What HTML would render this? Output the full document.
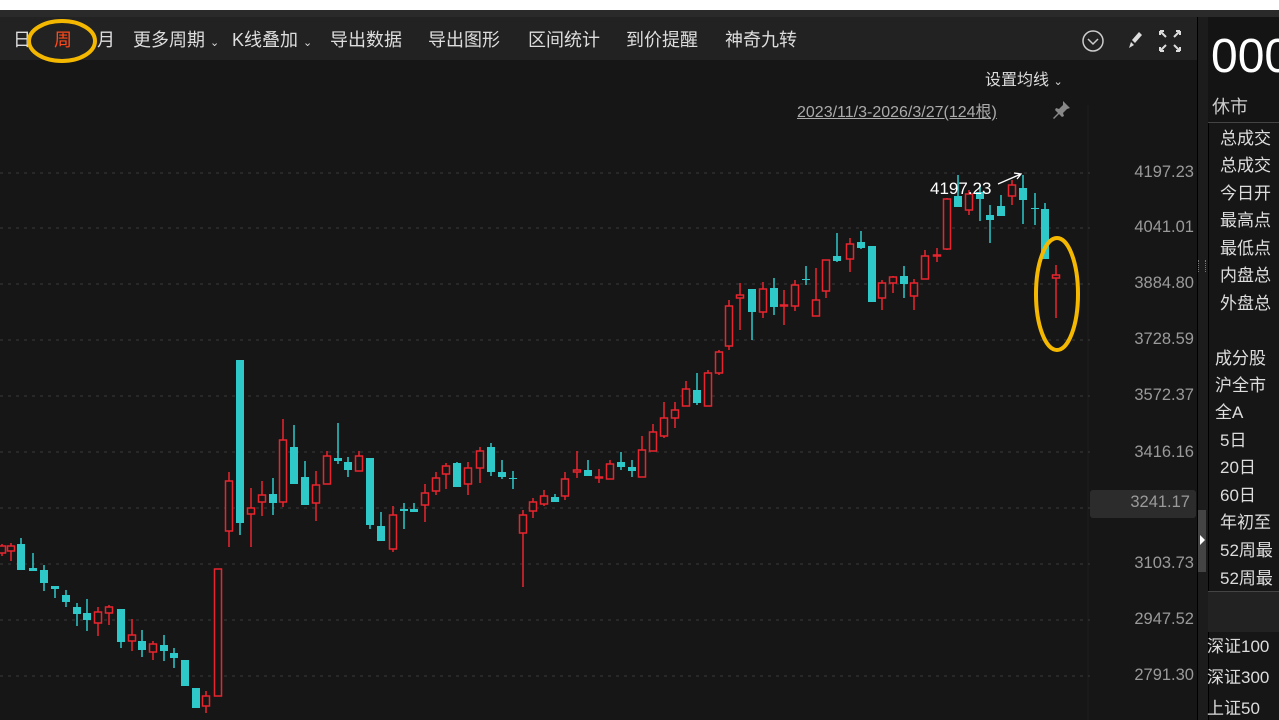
<!DOCTYPE html>
<html><head><meta charset="utf-8"><style>
body{margin:0;width:1279px;height:720px;overflow:hidden;background:#161616;font-family:"Liberation Sans","Noto Sans CJK SC",sans-serif;position:relative}
.a{position:absolute;white-space:nowrap}
.tb{position:absolute;top:10px;left:0;width:1197px;height:50px;background:#222}
.tb span{position:absolute;top:18px;font-size:18px;color:#ddd;line-height:20px}
.px{position:absolute;right:85px;font-size:16.5px;color:#9a9a9a;text-align:right;width:90px}
.r{position:absolute;left:1220px;font-size:17px;color:#ddd;line-height:20px}
</style></head><body>
<div class="a" style="left:0;top:0;width:1279px;height:10px;background:#fff"></div>
<div class="a" style="left:0;top:10px;width:1279px;height:7px;background:#2a2a2a"></div>
<div class="tb" style="top:17px;height:43px">
<span style="left:13px;top:13px">日</span>
<span style="left:54px;top:13px;color:#ff4a1a">周</span>
<span style="left:97px;top:13px">月</span>
<span style="left:133px;top:13px">更多周期 <small style="font-size:11px">⌄</small></span>
<span style="left:232px;top:13px">K线叠加 <small style="font-size:11px">⌄</small></span>
<span style="left:330px;top:13px">导出数据</span>
<span style="left:428px;top:13px">导出图形</span>
<span style="left:528px;top:13px">区间统计</span>
<span style="left:626px;top:13px">到价提醒</span>
<span style="left:725px;top:13px">神奇九转</span>
</div>
<svg class="a" style="left:0;top:0" width="1279" height="720">
<ellipse cx="62" cy="41" rx="33" ry="20" fill="none" stroke="#f5b800" stroke-width="4"/>
<circle cx="1093" cy="41" r="10" fill="none" stroke="#ccc" stroke-width="1.5"/>
<path d="M1088 39l5 5 5-5" fill="none" stroke="#ccc" stroke-width="1.5"/>
<path d="M1139 32l-7 8 3 3 7-8z M1131 42l3 3-5 3z" fill="#ddd"/>
<g stroke="#ddd" stroke-width="2" fill="none"><path d="M1160 31l6 6M1160 31v4M1160 31h4M1180 31l-6 6M1180 31v4M1180 31h-4M1160 51l6-6M1160 51v-4M1160 51h4M1180 51l-6-6M1180 51v-4M1180 51h-4"/></g>
<path d="M1063 101l7 7-3 1-4 4 1 3-2 1-3-3-5 5-1-1 5-5-3-3 1-2 3 1 4-4z" fill="#888"/>
<line x1="1088" y1="105" x2="1088" y2="720" stroke="#1d1d1d"/>
<g id="grid" stroke="#3a3a3a" stroke-dasharray="3 5"></g>
<g id="c"></g>
<text x="930" y="194" fill="#fff" font-size="17" font-family="Liberation Sans">4197.23</text>
<path d="M998 184L1021 174M1014 173l7 1-4 5" stroke="#fff" fill="none" stroke-width="1.3"/>
<ellipse cx="1057" cy="294" rx="21" ry="56" fill="none" stroke="#f5b800" stroke-width="4"/>
</svg>
<div class="a" style="left:985px;top:66px;font-size:16px;color:#ddd">设置均线 <small style="font-size:11px">⌄</small></div>
<div class="a" style="left:797px;top:98px;font-size:16px;color:#aaa;text-decoration:underline">2023/11/3-2026/3/27(124根)</div>
<div class="a" style="left:1090px;top:490px;width:106px;height:28px;background:#2c2c2c;border-radius:3px"></div>
<div class="px" style="top:163px">4197.23</div>
<div class="px" style="top:218px">4041.01</div>
<div class="px" style="top:274px">3884.80</div>
<div class="px" style="top:330px">3728.59</div>
<div class="px" style="top:386px">3572.37</div>
<div class="px" style="top:443px">3416.16</div>
<div class="px" style="top:493px;right:89px">3241.17</div>
<div class="px" style="top:554px">3103.73</div>
<div class="px" style="top:610px">2947.52</div>
<div class="px" style="top:666px">2791.30</div>
<div class="a" style="left:1197px;top:17px;width:10px;height:703px;background:#1c1c1c;border-left:1px solid #000;border-right:1px solid #000"></div>
<div class="a" style="left:1198px;top:510px;width:8px;height:62px;background:#444"></div>
<div class="a" style="left:1200px;top:535px;width:0;height:0;border-left:5px solid #fff;border-top:5px solid transparent;border-bottom:5px solid transparent"></div>
<div class="a" style="left:1198px;top:260px;width:6px;height:12px;border-left:1px dotted #777;border-right:1px dotted #777"></div>
<div class="a" style="left:1208px;top:17px;width:71px;height:105px;background:#141414;border-bottom:1px solid #444"></div>
<div class="a" style="left:1211px;top:29px;font-size:48px;color:#fff">000</div>
<div class="a" style="left:1212px;top:93px;font-size:18px;color:#ccc">休市</div>
<div class="r" style="top:129px">总成交</div>
<div class="r" style="top:156px">总成交</div>
<div class="r" style="top:184px">今日开</div>
<div class="r" style="top:211px">最高点</div>
<div class="r" style="top:239px">最低点</div>
<div class="r" style="top:266px">内盘总</div>
<div class="r" style="top:294px">外盘总</div>
<div class="r" style="top:349px;left:1215px">成分股</div>
<div class="r" style="top:376px;left:1215px">沪全市</div>
<div class="r" style="top:403px;left:1215px">全A</div>
<div class="r" style="top:431px">5日</div>
<div class="r" style="top:458px">20日</div>
<div class="r" style="top:486px">60日</div>
<div class="r" style="top:513px">年初至</div>
<div class="r" style="top:541px">52周最</div>
<div class="r" style="top:569px">52周最</div>
<div class="a" style="left:1208px;top:591px;width:71px;height:40px;background:#222;border-top:1px solid #444"></div>
<div class="r" style="top:637px;left:1207px">深证100</div>
<div class="r" style="top:668px;left:1207px">深证300</div>
<div class="r" style="top:699px;left:1207px">上证50</div>
<script>
var g=document.getElementById('grid'),s='';
[173,228,284,340,396,452,508,564,620,676].forEach(function(y){s+='<line x1="0" y1="'+y+'" x2="1090" y2="'+y+'"/>'});
g.innerHTML=s;
var d=[[2,'r',546,553,544,556],[11,'r',546,551,543,561],[21,'g',544,570,538,570],[33,'g',568,571,553,571],[44,'g',570,583,565,591],[55,'g',586,589,586,598],[66,'g',595,602,590,607],[77,'g',607,614,603,626],[87,'g',613,620,599,631],[98,'r',612,623,607,636],[109,'r',607,613,605,625],[121,'g',609,642,609,648],[132,'r',635,641,619,651],[142,'g',641,650,630,657],[153,'r',644,652,641,660],[164,'g',645,651,635,661],[174,'g',653,658,648,668],[185,'g',660,686,660,686],[196,'g',688,708,688,708],[206,'r',696,706,691,713],[218,'r',569,696,569,696],[229,'r',481,531,472,547],[240,'g',360,523,360,535],[251,'r',508,514,488,547],[262,'r',495,502,481,516],[273,'g',494,503,478,515],[283,'r',440,502,419,507],[294,'g',447,484,425,484],[305,'g',477,505,461,505],[316,'r',485,503,471,521],[327,'r',456,484,451,484],[338,'g',458,461,423,464],[348,'g',462,470,457,477],[359,'r',456,471,451,471],[370,'g',458,525,458,529],[381,'g',526,541,512,541],[393,'r',515,549,506,552],[404,'g',509,511,503,529],[414,'g',509,512,503,512],[425,'r',493,505,484,522],[436,'r',478,491,472,495],[446,'r',466,474,463,489],[457,'g',463,487,462,487],[468,'r',468,484,462,495],[480,'r',451,468,447,483],[491,'g',447,472,443,476],[502,'g',472,477,460,479],[513,'g',478,479,471,489],[523,'r',515,533,510,587],[533,'r',502,511,498,518],[544,'r',496,504,490,506],[555,'g',497,502,494,502],[565,'r',479,496,472,500],[577,'r',470,472,451,478],[588,'g',470,476,460,476],[599,'r',477,478,469,483],[610,'r',464,479,460,479],[621,'g',462,467,452,470],[632,'g',467,471,460,477],[642,'r',450,477,436,477],[653,'r',432,451,424,451],[664,'r',418,436,402,438],[675,'r',410,418,402,428],[686,'r',389,406,381,406],[697,'g',390,403,373,405],[708,'r',373,406,370,406],[719,'r',352,373,350,375],[729,'r',306,346,300,350],[740,'r',295,298,283,330],[752,'g',289,312,289,340],[763,'r',289,312,282,318],[774,'g',288,307,278,315],[784,'r',305,306,290,325],[795,'r',285,306,280,311],[806,'g',279,280,266,285],[816,'r',300,316,268,316],[826,'r',260,291,260,298],[837,'g',256,261,233,262],[850,'r',244,259,238,272],[861,'g',242,248,231,249],[872,'g',246,302,246,302],[882,'r',283,298,280,310],[893,'r',277,283,276,293],[904,'g',276,284,266,298],[914,'r',283,296,279,310],[925,'r',256,279,250,279],[937,'r',255,256,248,262],[947,'r',199,249,198,250],[958,'g',196,207,175,207],[969,'r',194,210,190,215],[980,'g',192,199,185,221],[990,'g',215,220,205,243],[1001,'g',206,216,195,216],[1012,'r',185,196,180,205],[1023,'g',188,200,175,224],[1035,'g',208,209,193,225],[1045,'g',209,259,203,259],[1056,'r',275,278,265,318]];
var h='';
d.forEach(function(c){var x=c[0],col=c[1]=='r'?'#e8252e':'#2fc8c8',t=c[2],b=Math.max(c[3],c[2]+1);
h+='<line x1="'+x+'" y1="'+c[4]+'" x2="'+x+'" y2="'+c[5]+'" stroke="'+col+'" stroke-width="1.5"/>';
if(c[1]=='r')h+='<rect x="'+(x-3.5)+'" y="'+t+'" width="7" height="'+(b-t)+'" fill="#161616" stroke="'+col+'" stroke-width="1.5"/>';
else h+='<rect x="'+(x-4)+'" y="'+t+'" width="8" height="'+(b-t)+'" fill="'+col+'"/>';});
document.getElementById('c').innerHTML=h;
</script>
</body></html>
